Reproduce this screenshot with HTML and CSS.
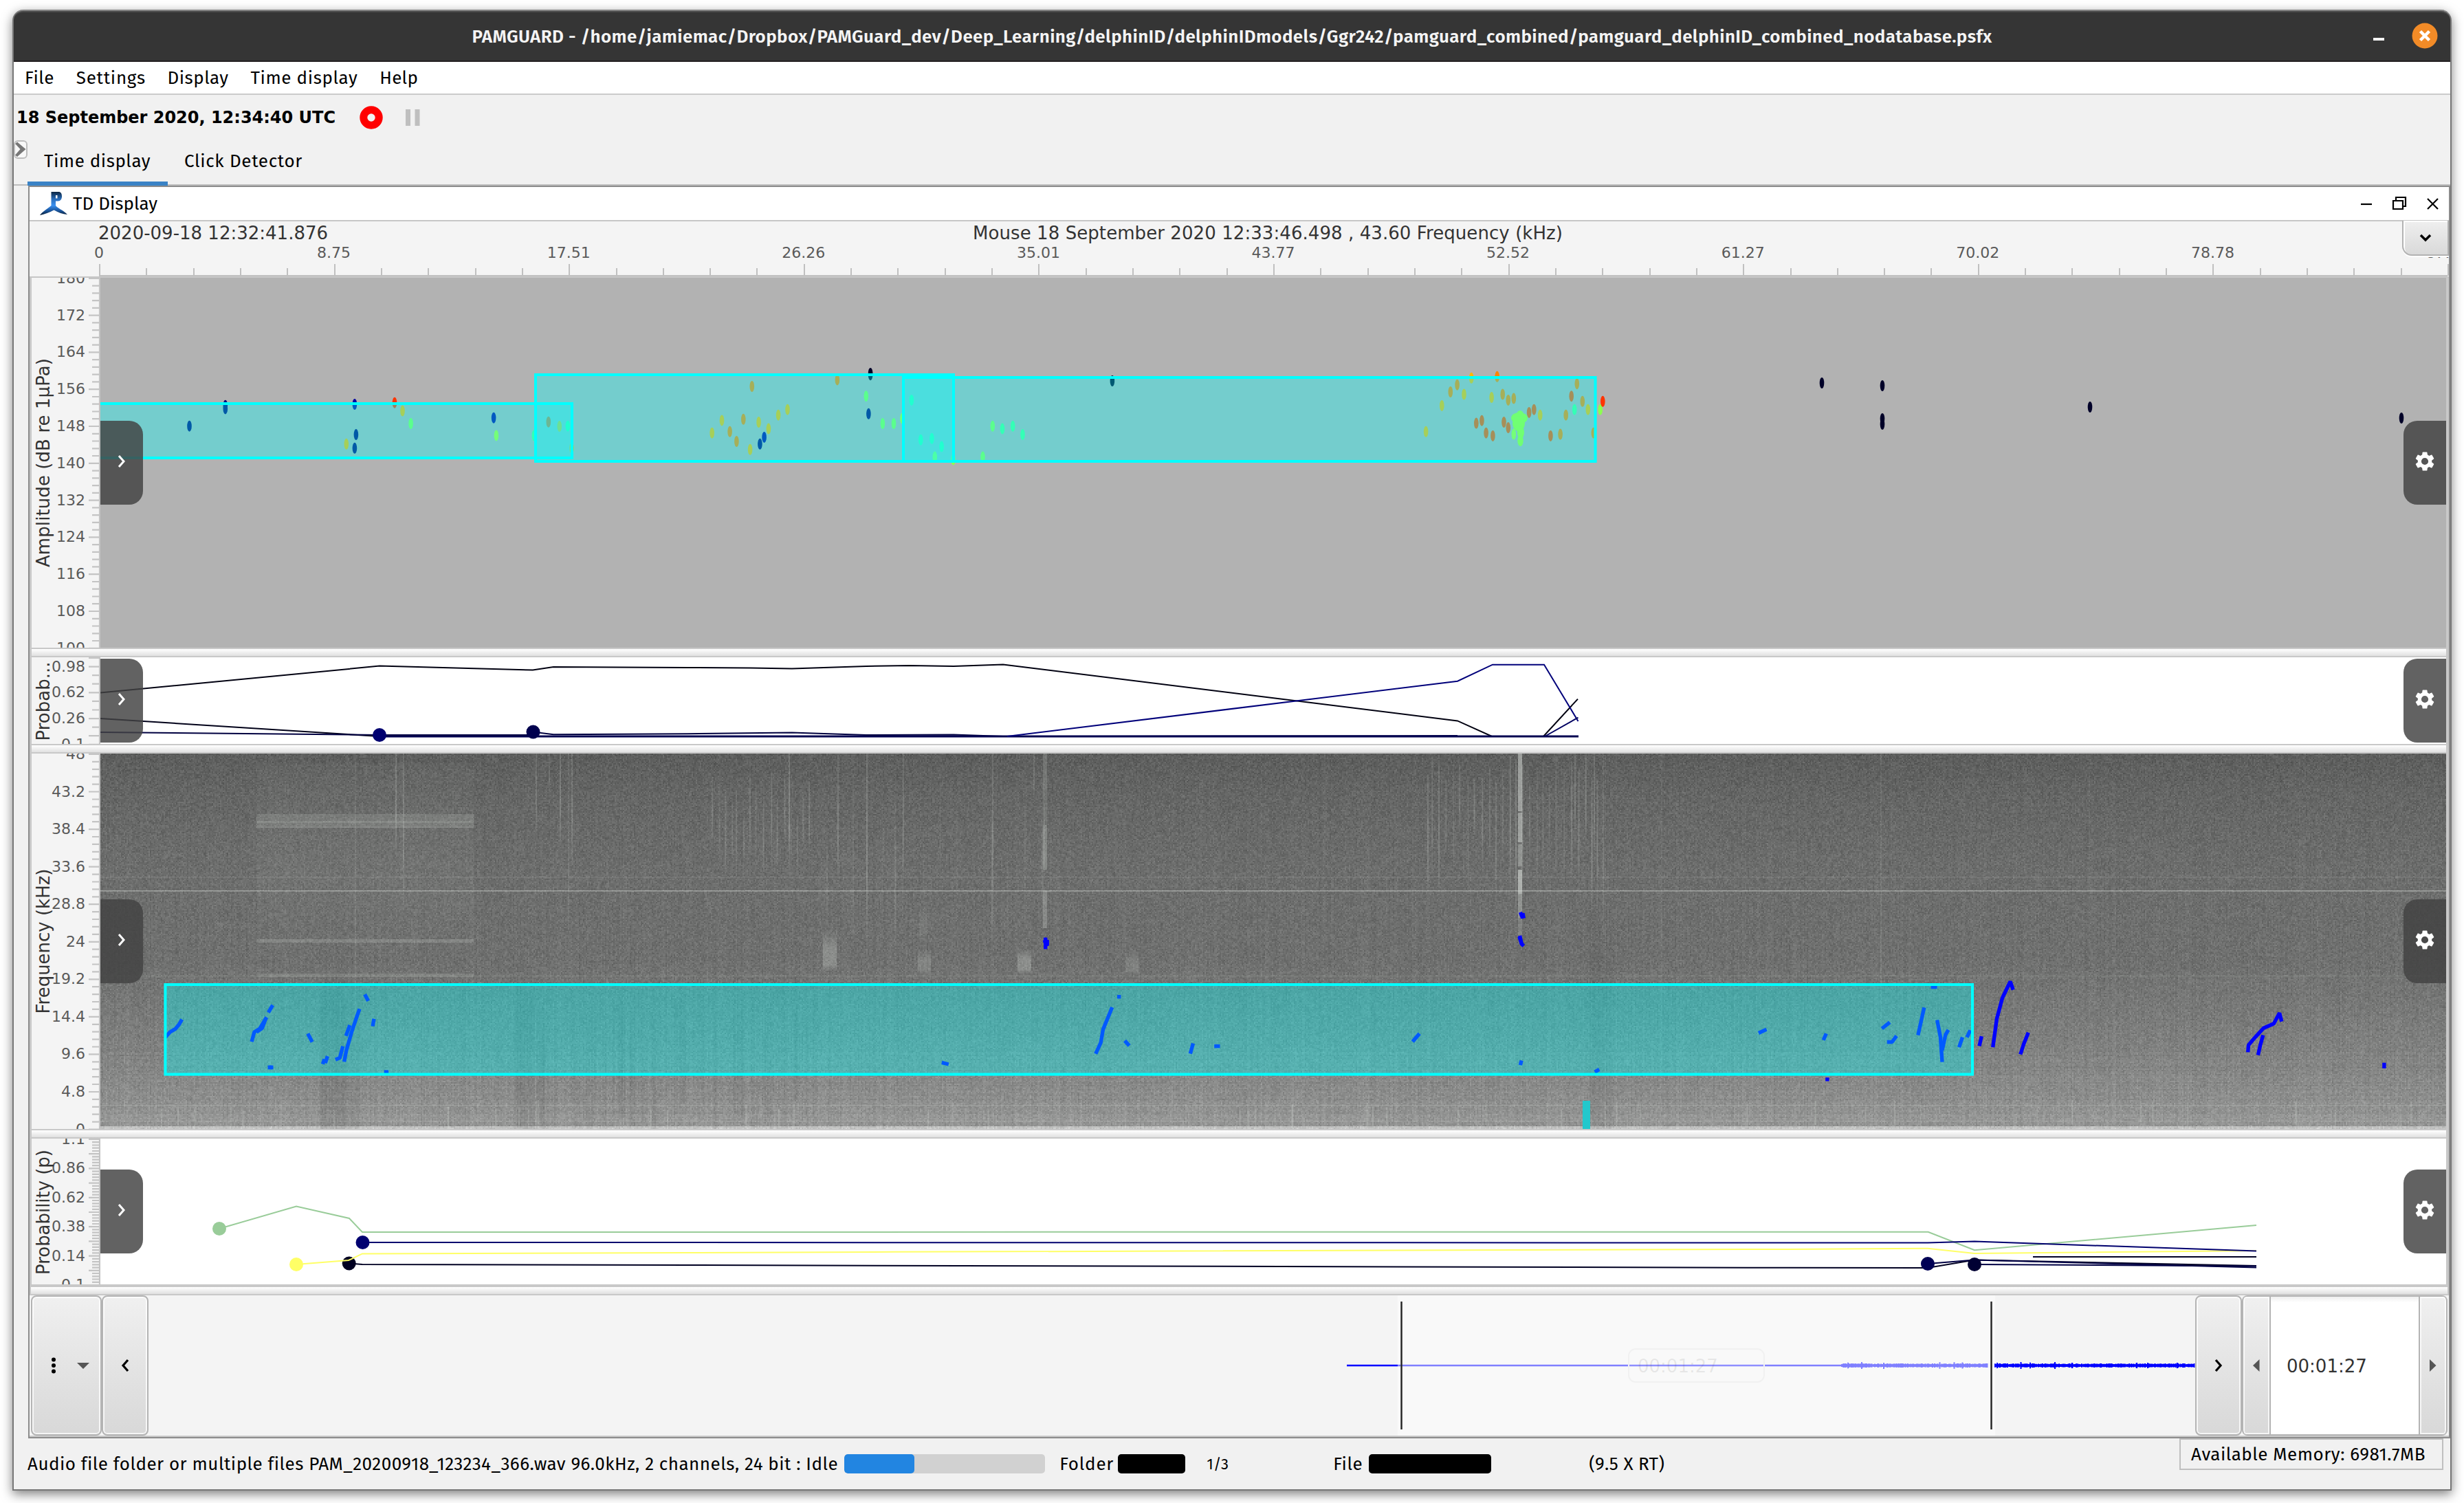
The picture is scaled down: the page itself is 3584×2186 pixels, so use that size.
FILE: index.html
```html
<!DOCTYPE html>
<html lang="en">
<head>
<meta charset="utf-8">
<title>PAMGUARD</title>
<link rel="stylesheet" href="styles.css">
</head>
<body>
<div class="window">
  <header class="titlebar">
    <span></span>
    <span class="title-text" data-fit="2211">PAMGUARD - /home/jamiemac/Dropbox/PAMGuard_dev/Deep_Learning/delphinID/delphinIDmodels/Ggr242/pamguard_combined/pamguard_delphinID_combined_nodatabase.psfx</span>
    <span class="title-buttons">
      <svg width="16" height="36" viewBox="0 0 16 36"><path d="M0 23h16" stroke="#f4f4f4" stroke-width="4"/></svg>
      <svg width="38" height="38" viewBox="0 0 38 38"><circle cx="19" cy="19" r="18.5" fill="#f28b27"/><path d="M12.5 12.5l13 13M25.500 12.500l-13 13" stroke="#fff" stroke-width="4.500"/></svg>
    </span>
  </header>
  <nav class="menubar">
    <span data-fit="43">File</span><span data-fit="101">Settings</span><span data-fit="89">Display</span><span data-fit="156">Time display</span><span data-fit="56">Help</span>
  </nav>
  <div class="toolbar">
    <span class="clock" data-fit="464">18 September 2020, 12:34:40 UTC</span>
    <svg class="record" width="34" height="34" viewBox="0 0 34 34"><circle cx="17" cy="17" r="11.200" fill="none" stroke="#f00" stroke-width="11"/></svg>
    <svg class="pause" width="21" height="24" viewBox="0 0 21 24"><path d="M0 0h7v24H0zM13.500 0h7v24h-7z" fill="#bfbfbf"/></svg>
  </div>
  <div class="tabs">
    <svg class="side-toggle" width="20" height="27" viewBox="0 0 20 27"><rect x="1" y="1" width="18" height="25" rx="5" fill="#f8f8f8" stroke="#bdbdbd" stroke-width="2"/><path d="M2 5l3-2.500L17.500 13 5 24l-3-2.500L9.500 13z" fill="#777"/></svg>
    <span class="tab active"><span data-fit="155">Time display</span></span>
    <span class="tab"><span data-fit="172">Click Detector</span></span>
  </div>
  <main class="frame">
    <div class="frame-title">
      <svg class="logo" width="40" height="38" viewBox="0 0 40 38">
        <defs><linearGradient id="lg" x1="0" y1="0" x2="0" y2="1"><stop offset="0" stop-color="#0b2440"/><stop offset=".3" stop-color="#2a6cb8"/><stop offset=".58" stop-color="#3a90f0"/><stop offset=".8" stop-color="#1b57a0"/><stop offset="1" stop-color="#081c33"/></linearGradient></defs>
        <path fill="url(#lg)" fill-rule="evenodd" d="M16.500 2H27c3.500 0 5 2.500 5 6.500s-2 7-5.500 7H23V22c3 4 10 6 17 13-7-.5-13-3-19.500-6.500C14 32 7 34.500 0 36c3-5 11-9 16.500-14zM23 7v4.500h2.500V7z"/>
      </svg>
      <span data-fit="123">TD Display</span>
      <svg class="frame-buttons" width="114" height="24" viewBox="0 0 114 24"><g fill="none" stroke="#000" stroke-width="2.200"><path d="M0 13h16"/><path d="M47 8h14v12H47zM51 8V3h14v13h-4"/><path d="M97 5l15 15M112 5L97 20"/></g></svg>
    </div>
    <section class="display">
      <svg class="time-axis" id="time-axis" viewBox="43 322 3519 80"></svg>
      <div class="corner-button"><svg width="18" height="12" viewBox="0 0 18 12"><path d="M2 2l7 7 7-7" fill="none" stroke="#000" stroke-width="3.500"/></svg></div>
      <div class="pane amp"><svg class="axis" id="axis1" viewBox="46 404 100 538"></svg><div class="plot"><svg id="plot1" viewBox="146 404 3412 538"></svg><i class="grip left"></i><i class="grip right"></i></div></div>
      <div class="splitter"></div>
      <div class="pane prob1"><svg class="axis" id="axis2" viewBox="46 956 100 126"></svg><div class="plot"><svg id="plot2" viewBox="146 956 3412 126"></svg><i class="grip left"></i><i class="grip right"></i></div></div>
      <div class="splitter"></div>
      <div class="pane freq"><svg class="axis" id="axis3" viewBox="46 1096 100 546"></svg><div class="plot"><canvas id="spectrogram" width="3412" height="546"></canvas><svg id="plot3" viewBox="146 1096 3412 546"></svg><i class="grip left"></i><i class="grip right"></i></div></div>
      <div class="splitter"></div>
      <div class="pane prob2"><svg class="axis" id="axis4" viewBox="46 1656 100 212"></svg><div class="plot"><svg id="plot4" viewBox="146 1656 3412 212"></svg><i class="grip left"></i><i class="grip right"></i></div></div>
      <div class="splitter wide"></div>
      <div class="scroller">
        <div class="button menu"><svg width="60" height="30" viewBox="0 0 60 30"><g fill="#000"><circle cx="7" cy="6.500" r="3"/><circle cx="7" cy="15" r="3"/><circle cx="7" cy="23.500" r="3"/></g><path d="M41 11h18l-9 9z" fill="#555"/></svg></div>
        <div class="button step"><svg width="14" height="20" viewBox="0 0 14 20"><path d="M11 2L4 10l7 8" fill="none" stroke="#000" stroke-width="3.200"/></svg></div>
        <div class="track"><svg id="track" viewBox="216 1884 2977 204"></svg></div>
        <div class="button step"><svg width="14" height="20" viewBox="0 0 14 20"><path d="M3 2l7 8-7 8" fill="none" stroke="#000" stroke-width="3.200"/></svg></div>
        <div class="spinner">
          <div class="spin"><svg width="10" height="18" viewBox="0 0 10 18"><path d="M9.500 0v18L0 9z" fill="#555"/></svg></div>
          <div class="value">00:01:27</div>
          <div class="spin"><svg width="10" height="18" viewBox="0 0 10 18"><path d="M0 0v18l9.500-9z" fill="#555"/></svg></div>
        </div>
      </div>
    </section>
  </main>
  <footer class="status">
    <span class="s-text" data-fit="1177">Audio file folder or multiple files PAM_20200918_123234_366.wav 96.0kHz, 2 channels, 24 bit : Idle</span>
    <span class="progress"><span class="bar"></span></span>
    <span class="s-folder" data-fit="79">Folder</span>
    <span class="block folder"></span>
    <span class="count" data-fit="32">1/3</span>
    <span class="s-file" data-fit="43">File</span>
    <span class="block file"></span>
    <span class="s-rate" data-fit="110">(9.5 X RT)</span>
    <span class="memory"><span data-fit="341">Available Memory: 6981.7MB</span></span>
  </footer>
</div>
<script src="script.js"></script>
</body>
</html>
```

FILE: styles.css
```css
* { box-sizing: border-box; }
body {
  margin: 0;
  padding: 14px 18px 0;
  width: 3584px;
  height: 2186px;
  overflow: hidden;
  background: #fff;
  font: 26px "Fira Sans", "Noto Sans", sans-serif;
  color: #000;
}
svg, canvas { display: block; flex: none; }
.window {
  width: 3548px;
  height: 2154px;
  display: flex;
  flex-direction: column;
  border: 2px solid #777;
  border-top: 0;
  border-radius: 16px 16px 0 0;
  background: #f1f1f1;
  box-shadow: 0 5px 16px rgba(0, 0, 0, .5);
  white-space: nowrap;
}
.titlebar {
  flex: none;
  height: 76px;
  display: grid;
  grid-template-columns: 1fr auto 1fr;
  align-items: center;
  background: #353535;
  border-top: 2px solid #858585;
  border-bottom: 2px solid #241f21;
  border-radius: 14px 14px 0 0;
  box-shadow: inset 0 2px #4a4a4a;
  color: #f4f4f4;
  font-weight: 600;
}
.title-text { position: relative; top: 1px; }
.title-buttons { display: flex; justify-content: flex-end; align-items: center; gap: 40px; padding-right: 18px; }
.menubar {
  flex: none;
  height: 48px;
  display: flex;
  align-items: center;
  gap: 31.800px;
  padding-left: 16px;
  background: #fff;
  border-bottom: 2px solid #cbcbcb;
}
.toolbar { flex: none; height: 66px; display: flex; align-items: center; padding-left: 4px; }
.clock { font: bold 24px "DejaVu Sans", sans-serif; }
.record { margin-left: 35px; }
.pause { margin-left: 33px; }
.tabs {
  flex: none;
  height: 66px;
  display: flex;
  align-items: flex-start;
  box-shadow: inset 0 -2px #bdbdbd;
}
.tab { height: 66px; padding: 1px 24px 6px 24px; display: flex; align-items: center; }
.tab.active { border-bottom: 6px solid #3a83c6; padding: 1px 25px 0 24px; }
.frame {
  flex: none;
  width: 3523px;
  height: 1822px;
  margin-left: 21px;
  border: 2px solid #8c8c8c;
}
.frame-title {
  height: 50px;
  display: flex;
  align-items: center;
  padding-left: 15px;
  background: #fff;
  border-bottom: 2px solid #c6c6c6;
}
.logo { margin-right: 8px; }
.frame-buttons { margin-left: auto; margin-right: 14px; }
.display { position: relative; display: flex; flex-direction: column; }
.time-axis {
  width: 3519px;
  height: 82px;
  background: #f4f4f4;
  border-bottom: 2px solid #c6c6c6;
}
.corner-button {
  position: absolute;
  right: 0;
  top: -1px;
  width: 68px;
  height: 51px;
  display: grid;
  place-items: center;
  border: 2px solid #b2b2b2;
  border-top: 0;
  border-radius: 0 0 0 14px;
  background: linear-gradient(#efefef, #d9d9d9);
  box-shadow: inset 2px 2px #fff, 0 2px #fff;
}
.pane {
  display: flex;
  flex: none;
  border-left: 3px solid #c8c8c8;
  border-right: 4px solid #c8c8c8;
}
.amp { height: 538px; }
.prob1 { height: 126px; }
.freq { height: 546px; }
.prob2 { height: 212px; }
.axis { width: 100px; height: 100%; background: #f4f4f4; }
.plot { position: relative; flex: none; width: 3412px; height: 100%; background: #fff; }
.amp .plot { background: #b2b2b2; }
.plot > svg, .plot > canvas { position: absolute; inset: 0; width: 3412px; height: 100%; }
.grip {
  position: absolute;
  top: 50%;
  width: 62px;
  height: 122px;
  margin-top: -61px;
  padding-bottom: 4px;
  display: grid;
  place-items: center;
  background: rgba(66, 66, 66, .83);
}
.grip.left { left: 0; border-radius: 0 20px 20px 0; }
.grip.right { right: 0; border-radius: 20px 0 0 20px; }
.splitter {
  flex: none;
  height: 14px;
  margin: 0 4px 0 3px;
  border-top: 2px solid #c8c8c8;
  border-bottom: 2px solid #c8c8c8;
  background: linear-gradient(#fff, #e0e0e0);
  box-shadow: -3px 0 #c8c8c8, 4px 0 #c8c8c8;
}
.splitter.wide { height: 16px; border-top-width: 4px; margin: 0 2px; box-shadow: -2px 0 #c8c8c8, 2px 0 #c8c8c8; }
.scroller {
  height: 206px;
  display: flex;
  padding: 0 2px;
  background: #f4f4f4;
  border-bottom: 2px solid #c8c8c8;
}
.button, .spin {
  display: grid;
  place-items: center;
  border: 2px solid #b4b4b4;
  border-radius: 8px;
  background: linear-gradient(#f0f0f0, #d8d8d8);
  box-shadow: inset 0 0 0 2px rgba(255, 255, 255, .75);
}
.menu { width: 103px; place-items: center start; padding-left: 24px; }
.step { width: 68px; }
.track { width: 2977px; }
.track svg { width: 2977px; height: 204px; }
.spinner { width: 299px; display: flex; border-top: 2px solid #b4b4b4; border-bottom: 2px solid #b4b4b4; border-radius: 8px; }
.spin { width: 42px; border-top: 0; border-bottom: 0; border-radius: 6px 0 0 6px; }
.spin:last-child { border-radius: 0 6px 6px 0; }
.value {
  flex: 1;
  display: flex;
  align-items: center;
  padding: 2px 0 0 23px;
  font: 26px "DejaVu Sans", sans-serif;
  color: #333;
  background: linear-gradient(#eee, #fff 8px);
}
.status { flex: none; height: 74px; display: flex; align-items: center; padding-left: 20px; }
.progress { width: 292px; height: 28px; margin-left: 9px; border-radius: 5px; background: #d1d1d1; overflow: hidden; }
.bar { display: block; width: 102px; height: 28px; border-radius: 5px; background: #2285e1; }
.s-folder { margin-left: 21px; }
.block { height: 28px; border-radius: 5px; background: #000; }
.block.folder { width: 98px; margin-left: 6px; }
.count { margin-left: 31px; font-size: 22px; }
.s-file { margin-left: 152px; }
.block.file { width: 178px; margin-left: 9px; }
.s-rate { margin-left: 142px; }
.memory {
  align-self: flex-start;
  margin-left: auto;
  margin-right: 10px;
  width: 384px;
  height: 46px;
  display: flex;
  align-items: center;
  padding-left: 15px;
  border: 2px solid #bfbfbf;
}
.tick-text { font: 22px "DejaVu Sans", sans-serif; fill: #5a5a5a; }
.axis-text { font: 26px "DejaVu Sans", sans-serif; fill: #333; }
```

FILE: script.js
```js
const NS = 'http://www.w3.org/2000/svg';
const byId = id => document.getElementById(id);

function add(parent, name, attrs, text) {
  const node = document.createElementNS(NS, name);
  for (const key in attrs) node.setAttribute(key, attrs[key]);
  if (text !== undefined) node.textContent = text;
  parent.appendChild(node);
  return node;
}

// Letter-spacing that gives each label its design width.
document.querySelectorAll('[data-fit]').forEach(el => {
  el.style.display = 'inline-block';
  const n = el.textContent.length;
  const space = (Number(el.dataset.fit) - el.getBoundingClientRect().width) / n;
  el.style.letterSpacing = space.toFixed(3) + 'px';
});

// Grips: a chevron on the left one, a gear on the right one.
const gear = 'M19.140 12.940c.04-.3.06-.61.06-.94 0-.32-.02-.64-.07-.94l2.030-1.580c.18-.14.23-.41.12-.61l-1.920-3.320c-.12-.22-.37-.29-.59-.22l-2.390.96c-.5-.38-1.030-.7-1.620-.94l-.36-2.540c-.04-.24-.24-.41-.48-.41h-3.840c-.24 0-.43.17-.47.41l-.36 2.540c-.59.24-1.130.57-1.620.94l-2.390-.96c-.22-.08-.47 0-.59.22L2.740 8.870c-.12.21-.08.47.12.61l2.030 1.580c-.05.3-.09.63-.09.94s.02.64.07.94l-2.030 1.580c-.18.14-.23.41-.12.61l1.920 3.320c.12.22.37.29.59.22l2.390-.96c.5.38 1.030.7 1.620.94l.36 2.540c.05.24.24.41.48.41h3.840c.24 0 .44-.17.47-.41l.36-2.540c.59-.24 1.130-.56 1.620-.94l2.390.96c.22.08.47 0 .59-.22l1.920-3.320c.12-.22.07-.47-.12-.61zM12 15.600a3.600 3.600 0 1 1 0-7.200 3.600 3.600 0 0 1 0 7.200z';
document.querySelectorAll('.grip').forEach(grip => {
  const right = grip.classList.contains('right');
  const s = add(grip, 'svg', right ? { width: 34, height: 34, viewBox: '0 0 24 24' } : { width: 12, height: 20, viewBox: '0 0 12 20' });
  if (right) add(s, 'path', { d: gear, fill: '#fff' });
  else add(s, 'path', { d: 'M2 2l7 8-7 8', fill: 'none', stroke: '#fff', 'stroke-width': 3 });
});

// Time axis
const time = byId('time-axis');
add(time, 'text', { x: 143, y: 348, class: 'axis-text' }, '2020-09-18 12:32:41.876');
add(time, 'text', { x: 1844, y: 348, class: 'axis-text', 'text-anchor': 'middle', textLength: 858 }, 'Mouse 18 September 2020 12:33:46.498 , 43.60 Frequency (kHz)');
['0', '8.75', '17.51', '26.26', '35.01', '43.77', '52.52', '61.27', '70.02', '78.78', '87.53'].forEach((label, i) => {
  add(time, 'text', { x: 144 + i * 341.6, y: 375, class: 'tick-text', 'text-anchor': 'middle' }, label);
});
let ticks = '';
for (let i = 0; i < 51; i++) ticks += `M${Math.round(145 + i * 68.32)} ${i % 5 ? 390 : 384}V401`;
add(time, 'path', { d: ticks + 'M144 401H3560', stroke: '#c0c0c0', 'stroke-width': 2 });

// Value axes
function valueAxis(id, title, cy, length, top, step, count, long, labels) {
  const svg = byId(id);
  let d = '';
  for (let i = 0; i <= count; i++) d += `M${long(i) ? 129 : 134} ${(top + i * step).toFixed(1)}H144`;
  add(svg, 'path', { d: d + 'M145 300V2000', stroke: '#c4c4c4', 'stroke-width': 2.2 });
  labels.forEach(([text, y]) => add(svg, 'text', { x: 124, y: y + 7, class: 'tick-text', 'text-anchor': 'end' }, text));
  add(svg, 'text', { class: 'axis-text', transform: `translate(72 ${cy}) rotate(-90)`, 'text-anchor': 'middle', textLength: length }, title);
}
const series = (texts, top, step) => texts.map((t, i) => [t, top + i * step]);
valueAxis('axis1', 'Amplitude (dB re 1µPa)', 673, 304, 404.8, 10.76, 50, i => i % 5 === 0,
  series(['180', '172', '164', '156', '148', '140', '132', '124', '116', '108', '100'], 404.8, 53.8));
valueAxis('axis2', 'Probab...', 1020, 115, 957, 12.58, 10, i => [0, 1, 4, 7, 9, 10].includes(i),
  series(['0.98', '0.62', '0.26', '0.1'], 969.5, 37.9));
valueAxis('axis3', 'Frequency (kHz)', 1369, 211, 1097, 10.91, 50, i => i % 5 === 0,
  series(['48', '43.2', '38.4', '33.6', '28.8', '24', '19.2', '14.4', '9.6', '4.8', '0'], 1097, 54.55));
valueAxis('axis4', 'Probability (p)', 1763, 182, 1657, 4.24, 50, i => i % 5 === 0,
  series(['1.1', '0.86', '0.62', '0.38', '0.14', '0.1'], 1657, 42.4));

// Click detections: [x, y, colour key], each block with its own origin and scale.
const colours = { n: '#000028', b: '#000078', B: '#0000a0', o: '#ff8400', y: '#ffb600', r: '#ff3400', R: '#ff5400', g: '#8cff50', G: '#b4ff30', t: '#50ff90' };
function clicks(ox, oy, sx, sy, list) {
  list.split(' ').forEach(item => {
    const [x, y, c] = item.split(',');
    add(byId('plot1'), 'ellipse', { cx: (ox + x / sx).toFixed(1), cy: (oy + y / sy).toFixed(1), rx: 3.3, ry: 8, fill: colours[c] });
  });
}
clicks(0, 380, 1.568, 2.178, '432,522,b 514,457,b 514,467,b 809,453,B 900,448,r 918,474,y 937,514,g 812,549,b 790,579,y 809,592,b 1126,496,B 1132,552,G 1218,552,t 1251,509,R 1276,523,y 1295,522,t 1304,592,y');
clicks(1000, 500, 1.12, 2.613, '40,339,y 56,291,y 69,334,o 80,371,o 91,287,o 105,162,o 102,402,y 116,298,y 132,323,y 118,381,b 125,355,B 148,271,y 163,250,y 244,137,o 298,112,n 298,118,n 291,199,g 295,266,b 318,303,g 336,303,g 350,284,G 365,214,t 380,365,t 398,360,t 414,391,t 403,430,G 433,440,g 481,430,g 497,313,g 513,323,t 530,313,t 546,345,t 692,141,n 1203,334,y 1229,235,y 1243,183,o 1254,156,o 1265,192,y 1277,130,y 1319,125,o 1285,302,R 1294,292,R 1301,339,R 1312,350,R 1310,204,y 1328,192,o 1337,214,o 1346,208,o 1330,298,R 1337,319,R 1346,344,G 1371,261,R 1379,250,R 1389,271,y 1406,350,R 1422,344,o 1431,271,o 1440,199,R 1449,152,o 1445,250,t 1458,219,o 1467,250,y 1476,339,o 1487,250,g 1491,219,r');
clicks(0, 0, 1, 1, '2650,557,n 2738,561,n 2738,609,n 2738,617,n 3040,592,n 3493,608,n');
[[2210, 608, 12, 8], [2211, 603, 5, 6], [2209, 616, 9, 11], [2212, 629, 5, 9], [2211.500, 641, 4.200, 8]].forEach(([cx, cy, rx, ry]) =>
  add(byId('plot1'), 'ellipse', { cx, cy, rx, ry, fill: '#acff28' }));

function groupBox(id, x0, y0, x1, y1) {
  add(byId(id), 'rect', { x: x0, y: y0, width: x1 - x0, height: y1 - y0, fill: '#0ff', 'fill-opacity': .35 });
  add(byId(id), 'rect', { x: x0 + 2, y: y0 + 2, width: x1 - x0 - 4, height: y1 - y0 - 4, fill: 'none', stroke: '#0ff', 'stroke-width': 4 });
}
groupBox('plot1', 100, 585, 834, 668);
groupBox('plot1', 777, 543, 1389, 673);
groupBox('plot1', 1312, 547, 2322.500, 673);

// Probability curves
const curve = (id, points, stroke, width = 2) => add(byId(id), 'polyline', { points, fill: 'none', stroke, 'stroke-width': width });
const dot = (id, cx, cy, fill) => add(byId(id), 'circle', { cx, cy, r: 10, fill });
curve('plot2', '146,1007.6 552,968.6 775,974.6 805,970 1000,971 1092,971.5 1152,972.6 1260,969 1323,968 1387,969 1459,966.5 2120,1048.4 2170,1071 2245,1071 2295,1016.6', '#000010');
curve('plot2', '146,1045 552,1071 2296,1071', '#000018');
curve('plot2', '146,1065 552,1069 770,1069 775,1064.6 805,1068.3 1000,1067.3 1152,1065.6 1260,1069 1387,1068.6 1459,1071 2120,1070', '#000040');
curve('plot2', '552,1071 2296,1071', '#000050', 2.8);
curve('plot2', '1465,1071 2120,990.7 2171,966.7 2246,966.7 2295.5,1049', '#00007a');
curve('plot2', '2247,1071 2295.5,1043.6', '#000060');
dot('plot2', 552, 1069, '#000070');
dot('plot2', 775.500, 1064.500, '#00004e');

curve('plot4', '319,1787 431,1754.5 508,1772 527,1792 2804.6,1791.7 2872,1818.3 3282,1782', '#99cc99');
dot('plot4', 319, 1787, '#99cc99');
dot('plot4', 507.700, 1837.500, '#000022');
curve('plot4', '431,1839 507,1833 527,1823.4 1000,1822 1300,1820.8 2600,1816.9 2804,1815.8 2872,1823 3282,1819', '#ffff66');
dot('plot4', 431, 1839, '#ffff66');
curve('plot4', '527,1807 2804,1807.5 2872,1805.6 3282,1819.6', '#00006e');
dot('plot4', 527.500, 1807, '#000070');
curve('plot4', '508,1837.5 527,1839 1000,1840 2600,1843.8 2804,1844 2872,1832.5 3282,1841', '#000022');
curve('plot4', '2804,1838 2872,1832.5 3282,1843.5', '#000044');
curve('plot4', '2872,1839 3282,1841.5', '#000044');
curve('plot4', '2957,1828 3282,1828', '#000022');
dot('plot4', 2804, 1838, '#000055');
dot('plot4', 2872, 1839, '#000033');

// Whistle contours, each block with its own origin and scale.
function whistles(ox, oy, sx, sy, list) {
  list.split(';').forEach(item => {
    const v = item.split(' ').map(Number);
    let pts = '';
    for (let i = 0; i < v.length; i += 2) pts += `${(ox + v[i] / sx).toFixed(1)},${(oy + v[i + 1] / sy).toFixed(1)} `;
    curve('plot3', pts, '#00f', 5.4).setAttribute('stroke-linejoin', 'bevel');
  });
}
whistles(0, 1080, 1.568, 2.613, '377 1120 388 1100 400 1088 408 1072 415 1052;574 1137 580 1100 592 1088 608 1044;585 1100 598 1085 606 1050;612 1026 622 998;615 1227 615 1242;619 1227 619 1242;702 1106 712 1138;736 1222 740 1203;742 1218 747 1192;765 1205 775 1198 782 1154;785 1213 790 1170 802 1100 812 1050 820 1012;789 1115 798 1074;832 957 840 982;853 1050 850 1078;876 1252 886 1252');
whistles(1000, 1080, 1.206, 2.613, '628 741 628 785;626 750 630 775;631 750 631 772;1461 645 1465 668;1465 648 1467 668;1460 734 1463 765 1467 773;1459 738 1464 768;757 959 757 973;716 1183 725 1140 729 1090 745 1006;767 1133 775 1152;882 1182 887 1143;924 1154 934 1154;446 1216 458 1223;1272 1137 1284 1106;1461 1226 1463 1208');
whistles(2300, 1080, 1.221, 2.613, '315 1104 329 1090;430 1131 435 1106;534 1087 548 1063;543 1138 552 1138 560 1115;598 1112 609 1007;632 1054 638 1120 641 1214;641 1170 647 1110 652 1092;671 1158 677 1120;685 1120 691 1093;621 929 632 929;24 1252 32 1242;437 1273 437 1287;707 1153 711 1116;731 1158 738 1050 748 970 762 908 767 940;780 1185 786 1145 794 1102;1184 1177 1185 1150 1197 1120 1212 1085 1230 1068 1240 1028 1244 1060;1202 1188 1206 1150 1211 1112;1426 1217 1426 1238');
groupBox('plot3', 238.500, 1430, 2871, 1564.500);
add(byId('plot3'), 'rect', { x: 2302, y: 1601, width: 11, height: 41, fill: '#22c8cc' });

// Spectrogram
const ctx = byId('spectrogram').getContext('2d');
let seed = 12345;
const rnd = () => ((seed = (seed * 1664525 + 1013904223) >>> 0) / 4294967296);
const W = 3412, H = 546;
const img = ctx.createImageData(W, H);
const levels = [[0, 93], [60, 101], [160, 108], [300, 111], [340, 116], [400, 124], [470, 134], [530, 145], [546, 150]];
const columns = Array.from({ length: W / 2 }, () => (rnd() - .5) * 7);
for (let y = 0; y < H; y += 2) {
  let k = 0;
  while (levels[k + 1][0] < y) k++;
  const [y0, l0] = levels[k], [y1, l1] = levels[k + 1];
  const row = (y > 430 ? (rnd() - .5) * 7 : 0) + (y >= 542 ? 45 : 0);
  const base = l0 + (l1 - l0) * (y - y0) / (y1 - y0) + row;
  for (let x = 0; x < W; x += 2) {
    const v = base + columns[x / 2] * (.4 + y / H) + (rnd() + rnd() - 1) * 17;
    for (const p of [y * W + x, y * W + x + 1, (y + 1) * W + x, (y + 1) * W + x + 1]) {
      img.data[p * 4] = v; img.data[p * 4 + 1] = v + 1; img.data[p * 4 + 2] = v; img.data[p * 4 + 3] = 255;
    }
  }
}
ctx.putImageData(img, 0, 0);
ctx.translate(-146, -1096);
const light = (x, y, w, h, a) => { ctx.fillStyle = `rgba(215,220,215,${a})`; ctx.fillRect(x, y, w, h); };
const dark = (x, y, w, h, a) => {
  const g = ctx.createLinearGradient(0, y, 0, y + h);
  g.addColorStop(0, 'rgba(30,30,30,0)');
  g.addColorStop(.3, `rgba(30,30,30,${a})`);
  g.addColorStop(1, `rgba(30,30,30,${a})`);
  ctx.fillStyle = g;
  ctx.fillRect(x, y, w, h);
};
function streak(x, y0, y1, w, a) {
  const g = ctx.createLinearGradient(0, y0, 0, y1);
  g.addColorStop(0, `rgba(215,220,215,${a * .6})`);
  g.addColorStop(.6, `rgba(215,220,215,${a})`);
  g.addColorStop(1, 'rgba(215,220,215,0)');
  ctx.fillStyle = g;
  ctx.fillRect(x, y0, w, y1 - y0);
}
streak(373, 1110, 1400, 316, .05);
light(373, 1184, 316, 20, .15); light(373, 1194, 316, 3, .14); light(373, 1202, 316, 2, .1);
light(373, 1366, 316, 5, .2); light(373, 1416, 316, 5, .14);
light(146, 1295, 3412, 1.500, .5); light(146, 1275, 3412, 1.500, .13); light(146, 1418, 3412, 3, .07);
light(146, 1607, 3412, 1.500, .22); light(146, 1630, 3412, 1.500, .25);
light(146, 1620, 3412, 8, .06);
[[516, 1642, .14], [575, 1250, .24], [586, 1340, .24], [779, 1220, .2], [798, 1160, .15], [814, 1235, .24], [831, 1270, .24], [826, 1400, .12], [1147, 1270, .3], [1218, 1300, .2], [1260, 1400, .27], [1313, 1300, .18], [1443, 1300, .18], [1503, 1170, .2], [2735, 1642, .16], [2331, 1400, .16], [2318, 1260, .22], [2290, 1230, .24], [2416, 1642, .08], [3038, 1400, .07]].forEach(([x, y, a]) => streak(x, 1096, y, 2, a));
for (let i = 0; i < 16; i++) streak(1032 + i * 9.500 + rnd() * 4, 1100 + rnd() * 90, 1230 + rnd() * 50, 2, .1 + rnd() * .12);
for (let i = 0; i < 26; i++) streak(2072 + i * 10 + rnd() * 4, 1096 + rnd() * 50, 1220 + rnd() * 130, 2, .12 + rnd() * .2);
for (let i = 0; i < 22; i++) streak(1180 + rnd() * 350, 1096 + rnd() * 150, 1260 + rnd() * 180, 2, .05 + rnd() * .08);
for (let i = 0; i < 60; i++) light(150 + rnd() * 3400, 1600 + rnd() * 15, 2, 35, .12 + rnd() * .15);
[[1096, 1150, .18], [1150, 1200, .12], [1200, 1265, .27], [1295, 1350, .25]].forEach(([a, b, o]) => light(1517, a, 6, b - a, o));
[[1096, 1180, .5], [1182, 1225, .5], [1228, 1260, .35], [1265, 1300, .6], [1300, 1335, .35], [1335, 1365, .18]].forEach(([a, b, o]) => light(2208, a, 6, b - a, o));
[[1197, 1352, 20, 60, .3], [1335, 1380, 19, 35, .22], [1337, 1310, 12, 60, .1], [1480, 1378, 20, 38, .3], [1637, 1383, 19, 34, .18]].forEach(([x, y, w, h, a]) => {
  const g = ctx.createLinearGradient(0, y, 0, y + h);
  g.addColorStop(0, 'rgba(200,205,200,0)'); g.addColorStop(.45, `rgba(200,205,200,${a})`);
  g.addColorStop(.85, `rgba(200,205,200,${a})`); g.addColorStop(1, 'rgba(200,205,200,0)');
  ctx.fillStyle = g; ctx.fillRect(x, y, w, h);
});
dark(466, 1400, 38, 242, .09); dark(504, 1400, 20, 242, .04); dark(748, 1400, 30, 242, .08); dark(2312, 1300, 34, 342, .05);
for (let i = 0; i < 32; i++) dark(780 + rnd() * 380, 1420 + rnd() * 60, 3 + rnd() * 5, 180, .045);

// Scroll track
const track = byId('track');
const wave = (x0, x1, stroke) => {
  let d = '';
  for (let x = x0; x < x1; x += 1.500) { const h = 1.8 + rnd() * 1.300 + (rnd() > .985 ? 2 : 0); d += `M${x} ${1986 - h}v${2 * h}`; }
  add(track, 'path', { d, stroke, 'stroke-width': 2 });
};
add(track, 'rect', { x: 2033, y: 1884, width: 869, height: 204, fill: '#f9f9f9' });
add(track, 'path', { d: 'M1959 1986H2033', stroke: '#00f', 'stroke-width': 2.4 });
add(track, 'path', { d: 'M2033 1986H2679', stroke: '#8080ff', 'stroke-width': 2.4 });
wave(2679, 2892, '#8080ff');
wave(2902, 3192, '#00f');
add(track, 'path', { d: 'M2708 1981v10M2740 1982v9', stroke: '#8080ff', 'stroke-width': 2 });
add(track, 'path', { d: 'M3014 1982v8M3108 1982v8M3120 1983v6M3167 1982v8', stroke: '#00f', 'stroke-width': 2.4 });
add(track, 'path', { d: 'M2038.5 1893V2079M2896.5 1893V2079', stroke: '#222', 'stroke-width': 2.4 });
add(track, 'rect', { x: 2369, y: 1962, width: 197, height: 48, rx: 10, fill: '#fff', 'fill-opacity': .12, stroke: '#f1f1f1', 'stroke-width': 2 });
add(track, 'text', { x: 2382, y: 1995.500, class: 'axis-text', style: 'fill-opacity:.1' }, '00:01:27');
```
